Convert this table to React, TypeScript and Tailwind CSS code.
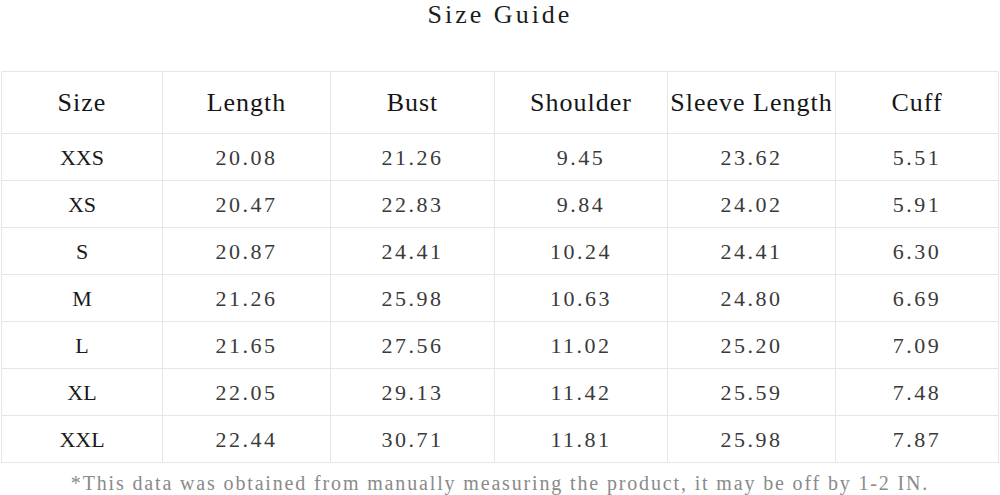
import React from "react";

const headers = ["Size", "Length", "Bust", "Shoulder", "Sleeve Length", "Cuff"];
const rows: string[][] = [
  ["XXS", "20.08", "21.26", "9.45", "23.62", "5.51"],
  ["XS", "20.47", "22.83", "9.84", "24.02", "5.91"],
  ["S", "20.87", "24.41", "10.24", "24.41", "6.30"],
  ["M", "21.26", "25.98", "10.63", "24.80", "6.69"],
  ["L", "21.65", "27.56", "11.02", "25.20", "7.09"],
  ["XL", "22.05", "29.13", "11.42", "25.59", "7.48"],
  ["XXL", "22.44", "30.71", "11.81", "25.98", "7.87"],
];

export default function App() {
  return (
    <div className="w-[1000px] h-[495px] bg-white overflow-hidden font-['Liberation_Serif',serif]">
      <div className="h-[29px] leading-[29px] text-[26px] tracking-[3px] text-center text-[#1c1c1c]">
        Size Guide
      </div>
      <div className="mt-[42px] ml-[1px] w-[998px] grid grid-cols-[161px_168px_164px_173px_168px_163px] border-l border-t border-[#e6e6e6]">
        {headers.map((h) => (
          <div
            key={h}
            className="h-[62px] flex items-center justify-center border-r border-b border-[#e6e6e6] text-[26px] tracking-[1px] text-[#161616]"
          >
            {h}
          </div>
        ))}
        {rows.map((r, ri) =>
          r.map((c, ci) => (
            <div
              key={`${ri}-${ci}`}
              className={
                ci === 0
                  ? "h-[47px] flex items-center justify-center border-r border-b border-[#e6e6e6] text-[22px] text-[#1a1a1a]"
                  : "h-[47px] flex items-center justify-center border-r border-b border-[#e6e6e6] text-[22px] tracking-[2.5px] text-[#3a3a3a]"
              }
            >
              {c}
            </div>
          ))
        )}
      </div>
      <div className="mt-[10px] h-[20px] leading-[20px] text-[20px] tracking-[1.85px] text-center text-[#8a8a8a]">
        *This data was obtained from manually measuring the product, it may be off by 1-2 IN.
      </div>
    </div>
  );
}
